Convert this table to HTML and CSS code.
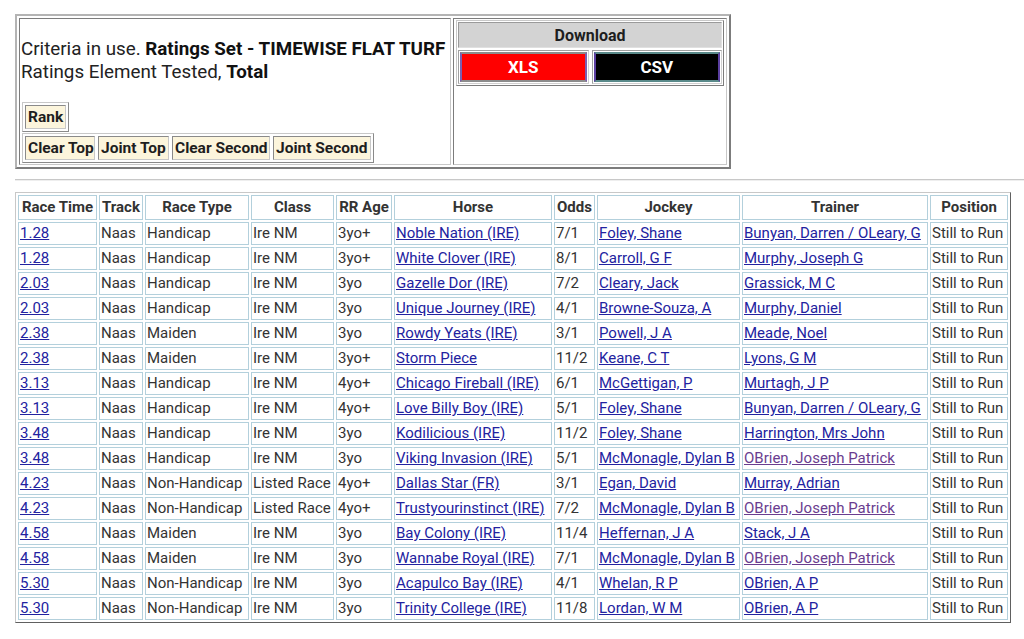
FILE: index.html
```html
<!DOCTYPE html>
<html>
<head>
<meta charset="utf-8">
<link rel="stylesheet" href="styles.css">
</head>
<body>
<div class="page">
  <div class="topbox">
    <div class="crit">
      <div class="crit-text">Criteria in use. <b>Ratings Set - TIMEWISE FLAT TURF</b><br>Ratings Element Tested, <b>Total</b></div>
      <div class="rank-box"><span class="btn">Rank</span></div>
      <div class="opts"><span class="btn w70">Clear Top</span><span class="btn w71">Joint Top</span><span class="btn w98">Clear Second</span><span class="btn w98">Joint Second</span></div>
    </div>
    <div class="dl">
      <div class="dl-table">
        <div class="dl-head">Download</div>
        <div class="dl-row">
          <div class="dl-cell"><div class="dl-btn xls">XLS</div></div>
          <div class="dl-cell"><div class="dl-btn csv">CSV</div></div>
        </div>
      </div>
    </div>
  </div>
  <div class="rule"></div>
  <table class="races">
    <colgroup>
      <col class="c1"><col class="c2"><col class="c3"><col class="c4"><col class="c5"><col class="c6"><col class="c7"><col class="c8"><col class="c9"><col class="c10">
    </colgroup>
    <thead>
      <tr><th>Race Time</th><th>Track</th><th>Race Type</th><th>Class</th><th>RR Age</th><th>Horse</th><th>Odds</th><th>Jockey</th><th>Trainer</th><th>Position</th></tr>
    </thead>
    <tbody>
      <tr><td><a href="#">1.28</a></td><td>Naas</td><td>Handicap</td><td>Ire NM</td><td>3yo+</td><td><a href="#">Noble Nation (IRE)</a></td><td>7/1</td><td><a href="#">Foley, Shane</a></td><td><a href="#">Bunyan, Darren / OLeary, G</a></td><td>Still to Run</td></tr>
      <tr><td><a href="#">1.28</a></td><td>Naas</td><td>Handicap</td><td>Ire NM</td><td>3yo+</td><td><a href="#">White Clover (IRE)</a></td><td>8/1</td><td><a href="#">Carroll, G F</a></td><td><a href="#">Murphy, Joseph G</a></td><td>Still to Run</td></tr>
      <tr><td><a href="#">2.03</a></td><td>Naas</td><td>Handicap</td><td>Ire NM</td><td>3yo</td><td><a href="#">Gazelle Dor (IRE)</a></td><td>7/2</td><td><a href="#">Cleary, Jack</a></td><td><a href="#">Grassick, M C</a></td><td>Still to Run</td></tr>
      <tr><td><a href="#">2.03</a></td><td>Naas</td><td>Handicap</td><td>Ire NM</td><td>3yo</td><td><a href="#">Unique Journey (IRE)</a></td><td>4/1</td><td><a href="#">Browne-Souza, A</a></td><td><a href="#">Murphy, Daniel</a></td><td>Still to Run</td></tr>
      <tr><td><a href="#">2.38</a></td><td>Naas</td><td>Maiden</td><td>Ire NM</td><td>3yo</td><td><a href="#">Rowdy Yeats (IRE)</a></td><td>3/1</td><td><a href="#">Powell, J A</a></td><td><a href="#">Meade, Noel</a></td><td>Still to Run</td></tr>
      <tr><td><a href="#">2.38</a></td><td>Naas</td><td>Maiden</td><td>Ire NM</td><td>3yo+</td><td><a href="#">Storm Piece</a></td><td>11/2</td><td><a href="#">Keane, C T</a></td><td><a href="#">Lyons, G M</a></td><td>Still to Run</td></tr>
      <tr><td><a href="#">3.13</a></td><td>Naas</td><td>Handicap</td><td>Ire NM</td><td>4yo+</td><td><a href="#">Chicago Fireball (IRE)</a></td><td>6/1</td><td><a href="#">McGettigan, P</a></td><td><a href="#">Murtagh, J P</a></td><td>Still to Run</td></tr>
      <tr><td><a href="#">3.13</a></td><td>Naas</td><td>Handicap</td><td>Ire NM</td><td>4yo+</td><td><a href="#">Love Billy Boy (IRE)</a></td><td>5/1</td><td><a href="#">Foley, Shane</a></td><td><a href="#">Bunyan, Darren / OLeary, G</a></td><td>Still to Run</td></tr>
      <tr><td><a href="#">3.48</a></td><td>Naas</td><td>Handicap</td><td>Ire NM</td><td>3yo</td><td><a href="#">Kodilicious (IRE)</a></td><td>11/2</td><td><a href="#">Foley, Shane</a></td><td><a href="#">Harrington, Mrs John</a></td><td>Still to Run</td></tr>
      <tr><td><a href="#">3.48</a></td><td>Naas</td><td>Handicap</td><td>Ire NM</td><td>3yo</td><td><a href="#">Viking Invasion (IRE)</a></td><td>5/1</td><td><a href="#">McMonagle, Dylan B</a></td><td><a href="#" class="visited">OBrien, Joseph Patrick</a></td><td>Still to Run</td></tr>
      <tr><td><a href="#">4.23</a></td><td>Naas</td><td>Non-Handicap</td><td>Listed Race</td><td>4yo+</td><td><a href="#">Dallas Star (FR)</a></td><td>3/1</td><td><a href="#">Egan, David</a></td><td><a href="#">Murray, Adrian</a></td><td>Still to Run</td></tr>
      <tr><td><a href="#">4.23</a></td><td>Naas</td><td>Non-Handicap</td><td>Listed Race</td><td>4yo+</td><td><a href="#">Trustyourinstinct (IRE)</a></td><td>7/2</td><td><a href="#">McMonagle, Dylan B</a></td><td><a href="#" class="visited">OBrien, Joseph Patrick</a></td><td>Still to Run</td></tr>
      <tr><td><a href="#">4.58</a></td><td>Naas</td><td>Maiden</td><td>Ire NM</td><td>3yo</td><td><a href="#">Bay Colony (IRE)</a></td><td>11/4</td><td><a href="#">Heffernan, J A</a></td><td><a href="#">Stack, J A</a></td><td>Still to Run</td></tr>
      <tr><td><a href="#">4.58</a></td><td>Naas</td><td>Maiden</td><td>Ire NM</td><td>3yo</td><td><a href="#">Wannabe Royal (IRE)</a></td><td>7/1</td><td><a href="#">McMonagle, Dylan B</a></td><td><a href="#" class="visited">OBrien, Joseph Patrick</a></td><td>Still to Run</td></tr>
      <tr><td><a href="#">5.30</a></td><td>Naas</td><td>Non-Handicap</td><td>Ire NM</td><td>3yo</td><td><a href="#">Acapulco Bay (IRE)</a></td><td>4/1</td><td><a href="#">Whelan, R P</a></td><td><a href="#">OBrien, A P</a></td><td>Still to Run</td></tr>
      <tr><td><a href="#">5.30</a></td><td>Naas</td><td>Non-Handicap</td><td>Ire NM</td><td>3yo</td><td><a href="#">Trinity College (IRE)</a></td><td>11/8</td><td><a href="#">Lordan, W M</a></td><td><a href="#">OBrien, A P</a></td><td>Still to Run</td></tr>
    </tbody>
  </table>
</div>
</body>
</html>
```

FILE: styles.css
```css
html, body {
  margin: 0;
  padding: 0;
  background: #fff;
}
body {
  font-family: Roboto, "Liberation Sans", sans-serif;
  color: #2b2b2b;
}
.page {
  padding: 14px 0 0 15px;
}
.topbox {
  display: flex;
  width: 716px;
  height: 155px;
  box-sizing: border-box;
  border: 2px solid;
  border-color: #b4b4b4 #7c7c7c #7c7c7c #b4b4b4;
  padding: 2px;
  gap: 2px;
}
.crit {
  width: 432px;
  box-sizing: border-box;
  border: 1px solid;
  border-color: #7c7c7c #c8c8c8 #c8c8c8 #7c7c7c;
  padding: 0 1px;
  display: flex;
  flex-direction: column;
  align-items: flex-start;
}
.crit-text {
  font-size: 18.8px;
  line-height: 23px;
  margin-top: 19px;
  color: #222;
  white-space: nowrap;
}
.crit-text b { color: #111; }
.rank-box {
  margin-top: 18px;
  margin-left: 1px;
  border: 1px solid;
  border-color: #c8c8c8 #8a8a8a #8a8a8a #c8c8c8;
  padding: 2px;
  display: flex;
}
.opts {
  margin-top: 1px;
  margin-left: 1px;
  border: 1px solid;
  border-color: #c8c8c8 #8a8a8a #8a8a8a #c8c8c8;
  padding: 2px;
  display: flex;
  gap: 3px;
}
.btn {
  display: block;
  box-sizing: border-box;
  height: 24px;
  line-height: 22px;
  padding: 0 2px;
  background: #fcf5dc;
  border: 1px solid;
  border-color: #8a8a8a #c8c8c8 #c8c8c8 #8a8a8a;
  font-weight: bold;
  font-size: 15.5px;
  color: #1e1e1e;
  white-space: nowrap;
}
.w70 { width: 70px; }
.w71 { width: 71px; }
.w98 { width: 98px; }
.dl {
  flex: 1;
  box-sizing: border-box;
  border: 1px solid;
  border-color: #7c7c7c #c8c8c8 #c8c8c8 #7c7c7c;
  padding: 1px 2px;
}
.dl-table {
  border: 1px solid;
  border-color: #c8c8c8 #7c7c7c #7c7c7c #c8c8c8;
  padding: 1px;
  display: flex;
  flex-direction: column;
  gap: 2px;
}
.dl-head {
  height: 26px;
  box-sizing: border-box;
  background: #d3d3d3;
  border: 1px solid;
  border-color: #9a9a9a #e0e0e0 #e0e0e0 #9a9a9a;
  text-align: center;
  font-weight: bold;
  font-size: 16px;
  line-height: 25px;
  color: #1e1e1e;
}
.dl-row {
  display: flex;
  gap: 3px;
}
.dl-cell {
  flex: 1;
  border: 1px solid;
  border-color: #a0a0a0 #d0d0d0 #d0d0d0 #a0a0a0;
  padding: 1px;
}
.dl-btn {
  height: 30px;
  box-sizing: border-box;
  border: 2px solid;
  border-color: #8c8c8c #7b5fb0 #8c8c8c #7b5fb0;
  text-align: center;
  font-weight: bold;
  font-size: 17px;
  line-height: 27px;
  color: #fff;
}
.xls { background: #ff0000; }
.csv { background: #000; border-color: #5a8a8a #5b3fa0 #5a8a8a #5b3fa0; }
.rule {
  margin-top: 10px;
  height: 0;
  border-top: 1px solid #c8c8c8;
  border-bottom: 1px solid #eeeeee;
}
.races {
  margin-top: 11px;
  border-collapse: separate;
  border-spacing: 2px;
  border: 1px solid;
  border-color: #c8c8c8 #606060 #606060 #c8c8c8;
  table-layout: fixed;
  font-size: 15px;
  color: #333;
}
.c1 { width: 79px; }
.c2 { width: 44px; }
.c3 { width: 104px; }
.c4 { width: 83px; }
.c5 { width: 56px; }
.c6 { width: 158px; }
.c7 { width: 41px; }
.c8 { width: 143px; }
.c9 { width: 186px; }
.c10 { width: 78px; }
.races th, .races td {
  border: 1px solid #b3d0dc;
  height: 21px;
  padding: 0 1px;
  white-space: nowrap;
  overflow: hidden;
  line-height: 21px;
}
.races th {
  font-weight: bold;
  text-align: center;
  color: #333;
  height: 23px;
  line-height: 23px;
}
.races td { text-align: left; }
.races a {
  color: #2222a0;
  text-decoration: underline;
}
.races a.visited { color: #6a3d8f; }
```
